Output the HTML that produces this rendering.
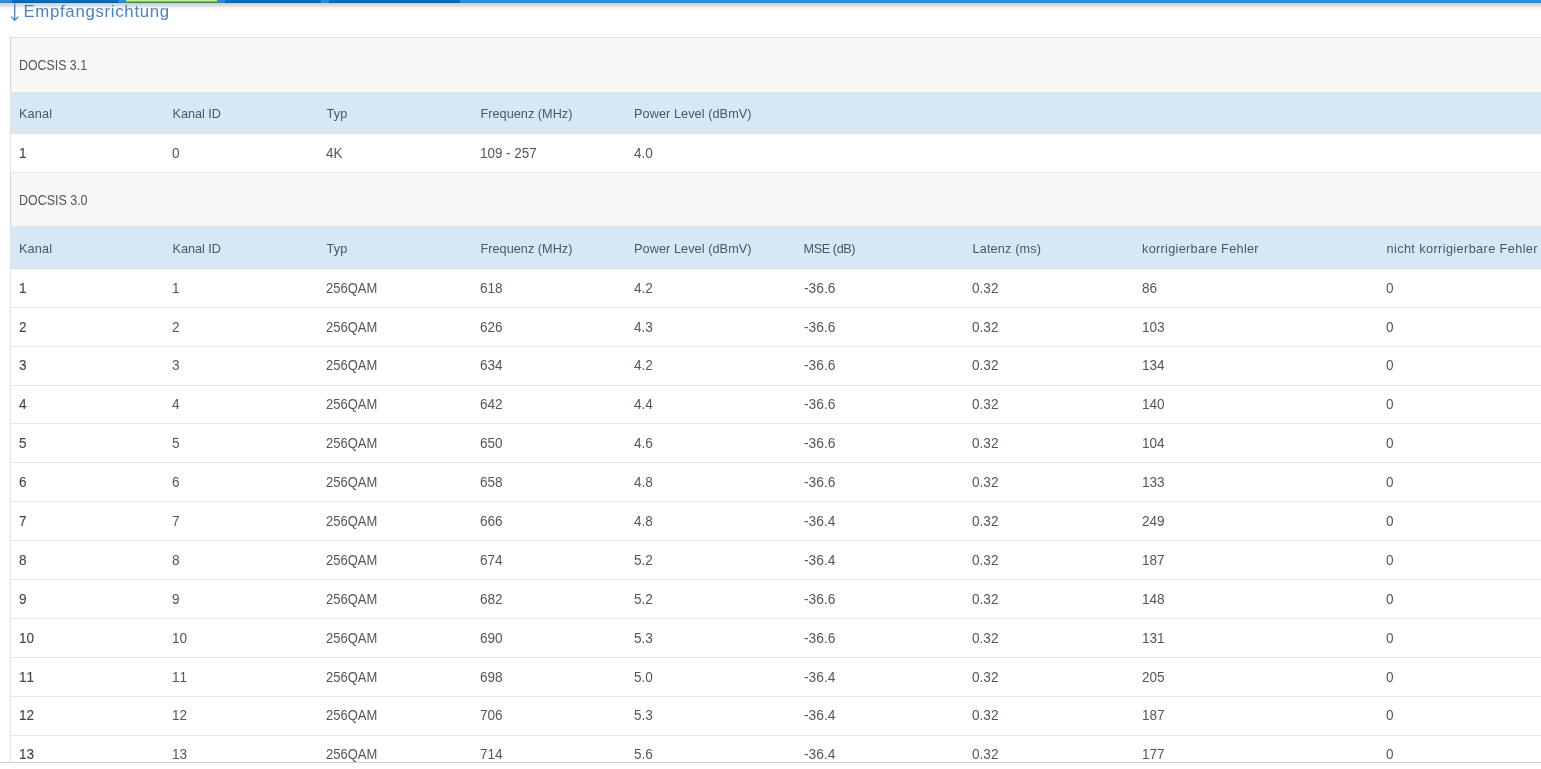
<!DOCTYPE html><html lang="de"><head><meta charset="utf-8"><title>Kabel-Informationen</title><style>
*{margin:0;padding:0;box-sizing:border-box}
html,body{width:1541px;height:769px;overflow:hidden;background:#fff}
body{position:relative;font-family:"Liberation Sans",Arial,sans-serif;color:#454c53;font-size:13px}
#pg{position:absolute;left:0;top:0;width:1541px;height:769px;overflow:hidden;will-change:transform}
.abs{position:absolute}
.t{position:absolute;white-space:nowrap;line-height:16px;height:16px}
.h{color:#4a5764;font-size:12.7px}
.d{font-size:14px;font-kerning:none;transform:scaleX(.97);transform-origin:0 50%;color:#50575d}
.b{-webkit-text-stroke:0.1px #3e454b;color:#3e454b}
.ln{position:absolute;left:11px;right:0;height:1px;background:#e5e5e5}
</style></head><body><div id="pg">
<div class="abs" style="left:0;top:0;width:1541px;height:2px;background:#2590e2"></div>
<div class="abs" style="left:0;top:2px;width:1541px;height:1px;background:#3d80b3"></div>
<div class="abs" style="left:12px;top:0;width:106px;height:2px;background:#046fc5"></div>
<div class="abs" style="left:12px;top:2px;width:106px;height:1px;background:#115796"></div>
<div class="abs" style="left:225px;top:0;width:96px;height:2px;background:#046fc5"></div>
<div class="abs" style="left:225px;top:2px;width:96px;height:1px;background:#115796"></div>
<div class="abs" style="left:329px;top:0;width:131px;height:2px;background:#046fc5"></div>
<div class="abs" style="left:329px;top:2px;width:131px;height:1px;background:#115796"></div>
<div class="abs" style="left:126px;top:0;width:91px;height:1px;background:#b9ef8a"></div>
<div class="abs" style="left:126px;top:1px;width:91px;height:1px;background:#86c068"></div>
<div class="abs" style="left:126px;top:2px;width:91px;height:1px;background:#3f8040"></div>
<div class="abs" style="left:0;top:3px;width:1541px;height:1px;background:#c0dcf4"></div>
<div class="abs" style="left:0;top:4px;width:1541px;height:1px;background:#cbd7df"></div>
<div class="abs" style="left:0;top:5px;width:1541px;height:1px;background:#dddddd"></div>
<div class="abs" style="left:0;top:6px;width:1541px;height:1px;background:#e7e7e9"></div>
<div class="abs" style="left:0;top:7px;width:1541px;height:1px;background:#f1f2f5"></div>
<div class="abs" style="left:0;top:8px;width:1541px;height:1px;background:#f8f8fb"></div>
<div class="abs" style="left:0;top:9px;width:1541px;height:1px;background:#fcfcfd"></div>
<div class="abs" style="left:10px;top:1px;width:9px;height:21px"><svg width="9" height="21" viewBox="0 0 9 21"><path d="M4.7 2.5V19.3M1.1 15.6L4.7 19.4L8.3 15.6" fill="none" stroke="#4b83c4" stroke-width="1.3"/></svg></div>
<h2 class="t" id="hd" style="left:23.4px;top:2px;font-weight:normal;font-size:16.8px;line-height:20px;height:20px;color:#4b83c4;letter-spacing:0.7px">Empfangsrichtung</h2>
<div class="abs" style="left:10px;top:37px;width:1px;height:725px;background:#e3e3e3"></div>
<div class="abs" style="left:10px;top:37px;width:1px;height:55px;background:#d4d4d4"></div>
<div class="abs" style="left:10px;top:173px;width:1px;height:53px;background:#d4d4d4"></div>
<div class="abs" style="left:11px;top:37px;right:0;height:55px;background:#f7f7f5;border-top:1px solid #dedede"></div>
<div class="abs" style="left:10px;top:92px;right:0;height:42px;background:#d7e7f5;border-top:1px solid #dce4ec;border-bottom:1px solid #d9e2eb;border-left:1px solid #dee5ed"></div>
<div class="ln" style="top:172px"></div>
<div class="abs" style="left:11px;top:173px;right:0;height:53px;background:#f7f7f5"></div>
<div class="abs" style="left:10px;top:226px;right:0;height:43px;background:#d7e7f5;border-top:1px solid #dce4ec;border-bottom:1px solid #d9e2eb;border-left:1px solid #dee5ed"></div>
<div class="ln" style="top:307px"></div>
<div class="ln" style="top:346px"></div>
<div class="ln" style="top:385px"></div>
<div class="ln" style="top:423px"></div>
<div class="ln" style="top:462px"></div>
<div class="ln" style="top:501px"></div>
<div class="ln" style="top:540px"></div>
<div class="ln" style="top:579px"></div>
<div class="ln" style="top:618px"></div>
<div class="ln" style="top:657px"></div>
<div class="ln" style="top:696px"></div>
<div class="ln" style="top:735px"></div>
<div class="abs" style="left:0;top:762px;width:1541px;height:1px;background:#cfcfcf"></div>
<div class="abs" style="left:0;top:763px;width:1541px;height:6px;background:#fff"></div>
<span class="t d" style="left:19px;top:57px;transform:scaleX(0.883)">DOCSIS 3.1</span>
<span class="t d" style="left:19px;top:192px;transform:scaleX(0.89)">DOCSIS 3.0</span>
<span class="t h" style="left:19px;top:105.5px;letter-spacing:0.15px">Kanal</span>
<span class="t h" style="left:172.6px;top:105.5px;letter-spacing:-0.05px">Kanal ID</span>
<span class="t h" style="left:326.5px;top:105.5px;letter-spacing:0.15px">Typ</span>
<span class="t h" style="left:480.5px;top:105.5px;letter-spacing:0.02px">Frequenz (MHz)</span>
<span class="t h" style="left:634px;top:105.5px;letter-spacing:0.07px">Power Level (dBmV)</span>
<span class="t d b" style="left:19px;top:145px">1</span>
<span class="t d" style="left:172.4px;top:145px">0</span>
<span class="t d" style="left:326.4px;top:145px;transform:scaleX(0.96)">4K</span>
<span class="t d" style="left:480.4px;top:145px;transform:scaleX(0.958)">109 - 257</span>
<span class="t d" style="left:634px;top:145px">4.0</span>
<span class="t h" style="left:19px;top:240.5px;letter-spacing:0.15px">Kanal</span>
<span class="t h" style="left:172.6px;top:240.5px;letter-spacing:-0.05px">Kanal ID</span>
<span class="t h" style="left:326.5px;top:240.5px;letter-spacing:0.15px">Typ</span>
<span class="t h" style="left:480.5px;top:240.5px;letter-spacing:0.02px">Frequenz (MHz)</span>
<span class="t h" style="left:634px;top:240.5px;letter-spacing:0.07px">Power Level (dBmV)</span>
<span class="t h" style="left:803.5px;top:240.5px;letter-spacing:-0.42px">MSE (dB)</span>
<span class="t h" style="left:972.5px;top:240.5px;letter-spacing:0.15px">Latenz (ms)</span>
<span class="t h" style="left:1142px;top:240.5px;letter-spacing:0.31px">korrigierbare Fehler</span>
<span class="t h" style="left:1386.5px;top:240.5px;letter-spacing:0.4px">nicht korrigierbare Fehler</span>
<span class="t d b" style="left:19px;top:280px">1</span>
<span class="t d" style="left:172.4px;top:280px">1</span>
<span class="t d" style="left:326.4px;top:280px;transform:scaleX(0.927)">256QAM</span>
<span class="t d" style="left:480.4px;top:280px">618</span>
<span class="t d" style="left:634px;top:280px">4.2</span>
<span class="t d" style="left:803.5px;top:280px;transform:scaleX(0.985)">-36.6</span>
<span class="t d" style="left:972.4px;top:280px">0.32</span>
<span class="t d" style="left:1141.7px;top:280px">86</span>
<span class="t d" style="left:1386.4px;top:280px">0</span>
<span class="t d b" style="left:19px;top:319px">2</span>
<span class="t d" style="left:172.4px;top:319px">2</span>
<span class="t d" style="left:326.4px;top:319px;transform:scaleX(0.927)">256QAM</span>
<span class="t d" style="left:480.4px;top:319px">626</span>
<span class="t d" style="left:634px;top:319px">4.3</span>
<span class="t d" style="left:803.5px;top:319px;transform:scaleX(0.985)">-36.6</span>
<span class="t d" style="left:972.4px;top:319px">0.32</span>
<span class="t d" style="left:1141.7px;top:319px">103</span>
<span class="t d" style="left:1386.4px;top:319px">0</span>
<span class="t d b" style="left:19px;top:357px">3</span>
<span class="t d" style="left:172.4px;top:357px">3</span>
<span class="t d" style="left:326.4px;top:357px;transform:scaleX(0.927)">256QAM</span>
<span class="t d" style="left:480.4px;top:357px">634</span>
<span class="t d" style="left:634px;top:357px">4.2</span>
<span class="t d" style="left:803.5px;top:357px;transform:scaleX(0.985)">-36.6</span>
<span class="t d" style="left:972.4px;top:357px">0.32</span>
<span class="t d" style="left:1141.7px;top:357px">134</span>
<span class="t d" style="left:1386.4px;top:357px">0</span>
<span class="t d b" style="left:19px;top:396px">4</span>
<span class="t d" style="left:172.4px;top:396px">4</span>
<span class="t d" style="left:326.4px;top:396px;transform:scaleX(0.927)">256QAM</span>
<span class="t d" style="left:480.4px;top:396px">642</span>
<span class="t d" style="left:634px;top:396px">4.4</span>
<span class="t d" style="left:803.5px;top:396px;transform:scaleX(0.985)">-36.6</span>
<span class="t d" style="left:972.4px;top:396px">0.32</span>
<span class="t d" style="left:1141.7px;top:396px">140</span>
<span class="t d" style="left:1386.4px;top:396px">0</span>
<span class="t d b" style="left:19px;top:435px">5</span>
<span class="t d" style="left:172.4px;top:435px">5</span>
<span class="t d" style="left:326.4px;top:435px;transform:scaleX(0.927)">256QAM</span>
<span class="t d" style="left:480.4px;top:435px">650</span>
<span class="t d" style="left:634px;top:435px">4.6</span>
<span class="t d" style="left:803.5px;top:435px;transform:scaleX(0.985)">-36.6</span>
<span class="t d" style="left:972.4px;top:435px">0.32</span>
<span class="t d" style="left:1141.7px;top:435px">104</span>
<span class="t d" style="left:1386.4px;top:435px">0</span>
<span class="t d b" style="left:19px;top:474px">6</span>
<span class="t d" style="left:172.4px;top:474px">6</span>
<span class="t d" style="left:326.4px;top:474px;transform:scaleX(0.927)">256QAM</span>
<span class="t d" style="left:480.4px;top:474px">658</span>
<span class="t d" style="left:634px;top:474px">4.8</span>
<span class="t d" style="left:803.5px;top:474px;transform:scaleX(0.985)">-36.6</span>
<span class="t d" style="left:972.4px;top:474px">0.32</span>
<span class="t d" style="left:1141.7px;top:474px">133</span>
<span class="t d" style="left:1386.4px;top:474px">0</span>
<span class="t d b" style="left:19px;top:513px">7</span>
<span class="t d" style="left:172.4px;top:513px">7</span>
<span class="t d" style="left:326.4px;top:513px;transform:scaleX(0.927)">256QAM</span>
<span class="t d" style="left:480.4px;top:513px">666</span>
<span class="t d" style="left:634px;top:513px">4.8</span>
<span class="t d" style="left:803.5px;top:513px;transform:scaleX(0.985)">-36.4</span>
<span class="t d" style="left:972.4px;top:513px">0.32</span>
<span class="t d" style="left:1141.7px;top:513px">249</span>
<span class="t d" style="left:1386.4px;top:513px">0</span>
<span class="t d b" style="left:19px;top:552px">8</span>
<span class="t d" style="left:172.4px;top:552px">8</span>
<span class="t d" style="left:326.4px;top:552px;transform:scaleX(0.927)">256QAM</span>
<span class="t d" style="left:480.4px;top:552px">674</span>
<span class="t d" style="left:634px;top:552px">5.2</span>
<span class="t d" style="left:803.5px;top:552px;transform:scaleX(0.985)">-36.4</span>
<span class="t d" style="left:972.4px;top:552px">0.32</span>
<span class="t d" style="left:1141.7px;top:552px">187</span>
<span class="t d" style="left:1386.4px;top:552px">0</span>
<span class="t d b" style="left:19px;top:591px">9</span>
<span class="t d" style="left:172.4px;top:591px">9</span>
<span class="t d" style="left:326.4px;top:591px;transform:scaleX(0.927)">256QAM</span>
<span class="t d" style="left:480.4px;top:591px">682</span>
<span class="t d" style="left:634px;top:591px">5.2</span>
<span class="t d" style="left:803.5px;top:591px;transform:scaleX(0.985)">-36.6</span>
<span class="t d" style="left:972.4px;top:591px">0.32</span>
<span class="t d" style="left:1141.7px;top:591px">148</span>
<span class="t d" style="left:1386.4px;top:591px">0</span>
<span class="t d b" style="left:19px;top:630px">10</span>
<span class="t d" style="left:172.4px;top:630px">10</span>
<span class="t d" style="left:326.4px;top:630px;transform:scaleX(0.927)">256QAM</span>
<span class="t d" style="left:480.4px;top:630px">690</span>
<span class="t d" style="left:634px;top:630px">5.3</span>
<span class="t d" style="left:803.5px;top:630px;transform:scaleX(0.985)">-36.6</span>
<span class="t d" style="left:972.4px;top:630px">0.32</span>
<span class="t d" style="left:1141.7px;top:630px">131</span>
<span class="t d" style="left:1386.4px;top:630px">0</span>
<span class="t d b" style="left:19px;top:669px">11</span>
<span class="t d" style="left:172.4px;top:669px">11</span>
<span class="t d" style="left:326.4px;top:669px;transform:scaleX(0.927)">256QAM</span>
<span class="t d" style="left:480.4px;top:669px">698</span>
<span class="t d" style="left:634px;top:669px">5.0</span>
<span class="t d" style="left:803.5px;top:669px;transform:scaleX(0.985)">-36.4</span>
<span class="t d" style="left:972.4px;top:669px">0.32</span>
<span class="t d" style="left:1141.7px;top:669px">205</span>
<span class="t d" style="left:1386.4px;top:669px">0</span>
<span class="t d b" style="left:19px;top:707px">12</span>
<span class="t d" style="left:172.4px;top:707px">12</span>
<span class="t d" style="left:326.4px;top:707px;transform:scaleX(0.927)">256QAM</span>
<span class="t d" style="left:480.4px;top:707px">706</span>
<span class="t d" style="left:634px;top:707px">5.3</span>
<span class="t d" style="left:803.5px;top:707px;transform:scaleX(0.985)">-36.4</span>
<span class="t d" style="left:972.4px;top:707px">0.32</span>
<span class="t d" style="left:1141.7px;top:707px">187</span>
<span class="t d" style="left:1386.4px;top:707px">0</span>
<span class="t d b" style="left:19px;top:746px">13</span>
<span class="t d" style="left:172.4px;top:746px">13</span>
<span class="t d" style="left:326.4px;top:746px;transform:scaleX(0.927)">256QAM</span>
<span class="t d" style="left:480.4px;top:746px">714</span>
<span class="t d" style="left:634px;top:746px">5.6</span>
<span class="t d" style="left:803.5px;top:746px;transform:scaleX(0.985)">-36.4</span>
<span class="t d" style="left:972.4px;top:746px">0.32</span>
<span class="t d" style="left:1141.7px;top:746px">177</span>
<span class="t d" style="left:1386.4px;top:746px">0</span>
</div></body></html>
